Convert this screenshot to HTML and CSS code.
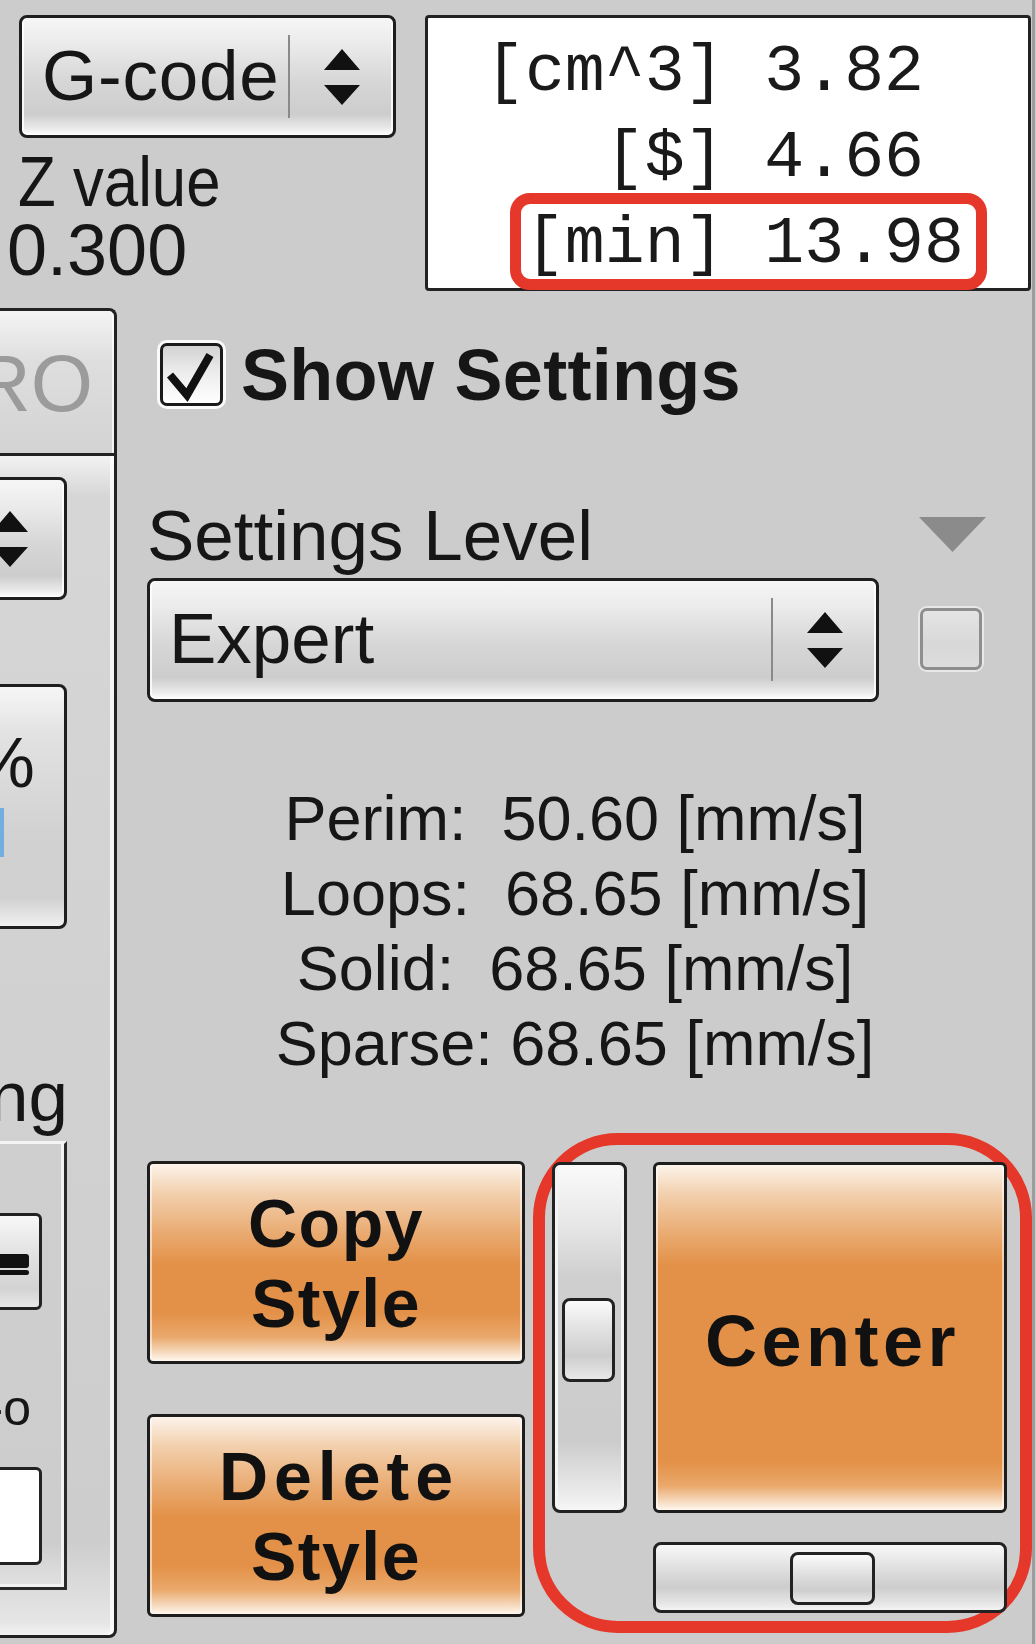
FILE: index.html
```html
<!DOCTYPE html>
<html lang="en">
<head>
<meta charset="utf-8">
<title>Settings panel</title>
<link rel="stylesheet" href="styles.css">
</head>
<body>
<div class="page">
  <div class="top">
    <div class="top-left">
      <div class="combo combo-gcode">
        <span class="combo-text">G-code</span>
        <span class="combo-sep"></span>
        <span class="combo-arrows"><svg class="spin" viewBox="0 0 36 56" width="36" height="56"><path d="M18 0 L36 21 L0 21 Z M0 36 L36 36 L18 56 Z"/></svg></span>
      </div>
      <div class="zlabel"><span class="zlabel-text">Z value</span></div>
      <div class="zval">0.300</div>
    </div>
    <div class="stats">
      <div class="stat-line">[cm^3] 3.82</div>
      <div class="stat-line">   [$] 4.66</div>
      <div class="stat-line"> <span class="hl">[min] 13.98</span></div>
    </div>
  </div>
  <div class="bottom">
    <div class="side">
      <div class="tab">RO</div>
      <div class="panel">
        <div class="combo combo-side">
          <span class="combo-text"></span>
          <span class="combo-arrows side-arrows"><svg class="spin" viewBox="0 0 36 56" width="36" height="56"><path d="M18 0 L36 21 L0 21 Z M0 36 L36 36 L18 56 Z"/></svg></span>
        </div>
        <div class="pct-box">
          <span class="pct">%</span>
          <span class="blue-mark"></span>
        </div>
        <div class="side-label">ng</div>
        <div class="group">
          <div class="bar-btn"><span class="bar bar-thick"></span><span class="bar bar-thin"></span></div>
          <div class="small-label">-o</div>
          <div class="entry"></div>
        </div>
      </div>
    </div>
    <div class="main">
      <div class="check-row">
        <span class="checkbox checked"><svg class="tick" viewBox="0 0 57 57" width="57" height="57"><path d="M7 29 L24 49 L47 9"/></svg></span>
        <span class="check-label">Show Settings</span>
      </div>
      <div class="level-row">
        <span class="level-label">Settings Level</span>
        <svg class="collapse" viewBox="0 0 67 35" width="67" height="35"><path d="M0 0 L67 0 L33.5 35 Z"/></svg>
      </div>
      <div class="expert-row">
        <div class="combo combo-expert">
          <span class="combo-text">Expert</span>
          <span class="combo-sep"></span>
          <span class="combo-arrows"><svg class="spin" viewBox="0 0 36 56" width="36" height="56"><path d="M18 0 L36 21 L0 21 Z M0 36 L36 36 L18 56 Z"/></svg></span>
        </div>
        <span class="checkbox disabled"></span>
      </div>
      <div class="speeds">
        <div class="speed-line">Perim:  50.60 [mm/s]</div>
        <div class="speed-line">Loops:  68.65 [mm/s]</div>
        <div class="speed-line">Solid:  68.65 [mm/s]</div>
        <div class="speed-line">Sparse: 68.65 [mm/s]</div>
      </div>
      <div class="actions">
        <div class="style-btns">
          <div class="obtn style-btn"><span class="obtn-label">Copy<br>Style</span></div>
          <div class="obtn style-btn"><span class="obtn-label"><span class="wide">Delete</span><br>Style</span></div>
        </div>
        <div class="view-group">
          <div class="vscroll"><span class="vthumb"></span></div>
          <div class="obtn center-btn"><span class="obtn-label">Center</span></div>
          <div class="hscroll"><span class="hthumb"></span></div>
        </div>
      </div>
    </div>
  </div>
</div>
</body>
</html>
```

FILE: styles.css
```css
* { box-sizing: border-box; }

html, body {
  margin: 0;
  padding: 0;
}

body {
  width: 1036px;
  height: 1644px;
  overflow: hidden;
  background: #cccccc;
  font-family: "Liberation Sans", Arial, sans-serif;
  color: #161616;
}

.page {
  width: 1035px;
  height: 1644px;
  border-right: 3px solid #9d9d9d;
}

/* ---------- top row ---------- */
.top {
  display: flex;
  align-items: flex-start;
  height: 291px;
}

.top-left {
  width: 425px;
  flex: none;
  padding-left: 19px;
  padding-top: 15px;
}

.combo {
  display: flex;
  align-items: flex-start;
  border: 3px solid #1e1e1e;
  border-radius: 8px;
  background: linear-gradient(to bottom, #f6f6f6 0%, #ebebeb 22%, #d6d6d6 55%, #cdcdcd 82%, #e9e9e9 94%, #ffffff 100%);
  box-shadow: inset 2px 0 0 rgba(255,255,255,0.8), inset -2px 0 0 rgba(255,255,255,0.8);
}

.combo-gcode {
  width: 377px;
  height: 123px;
}

.combo-gcode .combo-text {
  padding-left: 20px;
  letter-spacing: 0.8px;
}

.combo-text {
  flex: 1;
  padding-left: 19px;
  padding-top: 22px;
  font-size: 71px;
  line-height: 71px;
  white-space: nowrap;
}

.combo-sep {
  width: 2px;
  height: 83px;
  margin-top: 17px;
  background: #8a8a8a;
}

.combo-arrows {
  width: 103px;
  flex: none;
  display: flex;
  justify-content: center;
  padding-top: 31px;
}

.spin { display: block; fill: #111; }

.zlabel {
  margin-top: 10px;
  margin-left: -1px;
  font-size: 71px;
  line-height: 68px;
  white-space: nowrap;
}

.zlabel-text {
  display: inline-block;
  transform: scaleX(0.87);
  transform-origin: 0 0;
}

.zval {
  margin-left: -12px;
  font-size: 72px;
  line-height: 68px;
}

.stats {
  width: 606px;
  height: 276px;
  margin-top: 15px;
  flex: none;
  border: 3px solid #222;
  border-radius: 4px;
  background: #ffffff;
  padding-top: 12px;
  padding-left: 57px;
  font-family: "Courier New", "Liberation Mono", monospace;
  font-size: 66.5px;
  line-height: 86px;
  color: #1a1a1a;
}

.stat-line { white-space: pre; }

.hl {
  display: inline-block;
  border: 11px solid #e5382a;
  border-radius: 20px;
  margin: -20px 0 -20px -15px;
  padding: 7px 12px 0 4px;
  line-height: 68px;
}

/* ---------- bottom ---------- */
.bottom {
  display: flex;
  height: 1353px;
}

.side {
  width: 118px;
  flex: none;
  overflow: hidden;
}

.tab {
  margin-top: 17px;
  margin-left: -40px;
  width: 157px;
  height: 145px;
  border: 3px solid #222;
  border-bottom: none;
  border-radius: 0 8px 0 0;
  background: linear-gradient(to bottom, #f4f4f4 0%, #dedede 35%, #d3d3d3 100%);
  box-shadow: inset -2px 0 0 rgba(255,255,255,0.7);
  text-align: right;
  padding-right: 21px;
  padding-top: 33px;
  font-size: 80px;
  line-height: 80px;
  color: #9b9b9b;
}

.panel {
  margin-left: -40px;
  width: 157px;
  height: 1185px;
  border: 3px solid #222;
  border-left: none;
  border-radius: 0 0 8px 0;
  background: linear-gradient(to bottom, #f2f2f2 0px, #d6d6d6 40px, #cdcdcd 92%, #e6e6e6 99%, #f4f4f4 100%);
  box-shadow: inset -4px 0 0 rgba(255,255,255,0.75);
  display: flex;
  flex-direction: column;
  align-items: flex-end;
  padding-right: 47px;
}

.combo-side {
  margin-top: 21px;
  width: 160px;
  height: 123px;
  flex: none;
}

.side-arrows { width: 108px; }

.pct-box {
  margin-top: 84px;
  width: 160px;
  height: 245px;
  flex: none;
  border: 3px solid #1e1e1e;
  border-radius: 8px;
  background: linear-gradient(to bottom, #f6f6f6 0%, #e2e2e2 20%, #d2d2d2 60%, #d0d0d0 88%, #f0f0f0 100%);
  display: flex;
  flex-direction: column;
  align-items: flex-end;
  padding-right: 29px;
  padding-top: 40px;
}

.pct {
  font-size: 71px;
  line-height: 71px;
}

.blue-mark {
  display: block;
  width: 4px;
  height: 49px;
  margin-top: 10px;
  margin-right: 31px;
  background: #72aee0;
}

.side-label {
  margin-top: 132px;
  margin-right: -1px;
  font-size: 71px;
  line-height: 71px;
}

.group {
  margin-top: 9px;
  width: 160px;
  height: 449px;
  flex: none;
  border-top: 3px solid #f4f4f4;
  border-right: 3px solid #2a2a2a;
  border-bottom: 3px solid #2a2a2a;
  box-shadow: inset -3px -3px 0 #f2f2f2;
  background: linear-gradient(to bottom, #cfcfcf 0%, #cdcdcd 90%, #e2e2e2 100%);
  display: flex;
  flex-direction: column;
  align-items: flex-end;
  padding-right: 22px;
}

.bar-btn {
  margin-top: 69px;
  width: 120px;
  height: 97px;
  flex: none;
  border: 3px solid #222;
  border-radius: 6px;
  background: linear-gradient(to bottom, #f8f8f8 0%, #e2e2e2 40%, #d3d3d3 80%, #e8e8e8 100%);
  display: flex;
  flex-direction: column;
  align-items: flex-end;
  padding-right: 10px;
}

.bar {
  display: block;
  width: 60px;
  background: #111;
  border-radius: 0 3px 3px 0;
}

.bar-thick { height: 14px; margin-top: 38px; }
.bar-thin { height: 5px; margin-top: 2px; }

.small-label {
  margin-top: 73px;
  margin-right: 11px;
  font-size: 50px;
  line-height: 50px;
}

.entry {
  margin-top: 34px;
  width: 120px;
  height: 98px;
  flex: none;
  border: 3px solid #222;
  border-radius: 6px;
  background: #ffffff;
}

/* ---------- main column ---------- */
.main {
  flex: none;
  width: 914px;
  min-width: 0;
  padding-left: 29px;
  padding-right: 45px;
}

.check-row {
  display: flex;
  align-items: flex-start;
  margin-top: 52px;
}

.checkbox {
  display: block;
  flex: none;
  width: 63px;
  height: 63px;
  border-radius: 7px;
}

.checkbox.checked {
  margin-left: 13px;
  border: 3px solid #1a1a1a;
  background: linear-gradient(to bottom, #d2d2d2 0%, #ececec 45%, #ffffff 100%);
  box-shadow: 0 0 0 3px rgba(255,255,255,0.9);
}

.tick {
  display: block;
  fill: none;
  stroke: #111;
  stroke-width: 8;
  stroke-linejoin: miter;
}

.check-label {
  margin-left: 18px;
  margin-top: -3px;
  font-weight: bold;
  font-size: 72px;
  line-height: 71px;
  letter-spacing: 0.3px;
  white-space: nowrap;
}

.level-row {
  display: flex;
  justify-content: space-between;
  align-items: flex-start;
  margin-top: 89px;
}

.level-label {
  font-size: 71px;
  line-height: 71px;
  white-space: nowrap;
}

.collapse {
  display: block;
  flex: none;
  margin-top: 17px;
  margin-right: 1px;
  fill: #8b8b8b;
}

.expert-row {
  display: flex;
  align-items: flex-start;
  margin-top: 7px;
}

.combo-expert {
  width: 732px;
  height: 124px;
  flex: none;
}

.checkbox.disabled {
  margin-left: 41px;
  margin-top: 30px;
  width: 62px;
  height: 62px;
  border: 3px solid #8e8e8e;
  background: linear-gradient(to bottom, #e4e4e4 0%, #d8d8d8 60%, #dcdcdc 100%);
  box-shadow: 0 0 0 2px rgba(235,235,235,0.9);
}

.speeds {
  margin: 79px -45px 0 -29px;
  text-align: center;
  font-size: 63px;
  line-height: 75px;
}

.speed-line { white-space: pre; }

.actions {
  display: flex;
  align-items: flex-start;
  margin-top: 52px;
}

.style-btns {
  width: 378px;
  flex: none;
  margin-top: 28px;
  display: flex;
  flex-direction: column;
  gap: 50px;
}

.obtn {
  border: 3px solid #1d1d1d;
  border-radius: 6px;
  background: linear-gradient(to bottom, #fcf3ea 0px, #f2cfac 30px, #e9aa70 70px, #e39148 100px, #e39148 calc(100% - 48px), #eaa96c calc(100% - 24px), #f6dcc2 calc(100% - 8px), #fff7ef 100%);
  box-shadow: inset 2px 0 0 rgba(255,255,255,0.55), inset -2px 0 0 rgba(255,255,255,0.55);
  display: flex;
  align-items: center;
  justify-content: center;
  font-weight: bold;
  color: #111;
}

.obtn-label {
  display: block;
  text-align: center;
  white-space: nowrap;
}

.style-btn {
  height: 203px;
  font-size: 68px;
  line-height: 80px;
  letter-spacing: 1.5px;
}

.wide { letter-spacing: 6px; margin-right: -6px; }

.view-group {
  margin-left: 8px;
  width: 499px;
  height: 500px;
  flex: none;
  border: 12px solid #e5382a;
  border-radius: 85px;
  padding: 17px 13px 8px 7px;
  display: grid;
  grid-template-columns: 75px 354px;
  grid-template-rows: 351px 71px;
  column-gap: 26px;
  row-gap: 29px;
}

.vscroll {
  border: 3px solid #222;
  border-radius: 8px;
  background: linear-gradient(to bottom, #fafafa 0%, #e6e6e6 18%, #cfcfcf 32%, #cccccc 80%, #e4e4e4 92%, #f6f6f6 100%);
  box-shadow: inset 3px 0 0 #f4f4f4, inset -3px 0 0 #f4f4f4;
  padding-left: 7px;
  padding-top: 133px;
}

.vthumb {
  display: block;
  width: 53px;
  height: 84px;
  border: 3px solid #222;
  border-radius: 8px;
  background: linear-gradient(to bottom, #fbfbfb 0%, #e2e2e2 35%, #cdcdcd 70%, #e8e8e8 100%);
}

.center-btn {
  font-size: 72px;
  line-height: 72px;
  letter-spacing: 4.5px;
  padding-top: 6px;
  padding-left: 5px;
}

.hscroll {
  grid-column: 2;
  border: 3px solid #222;
  border-radius: 8px;
  background: linear-gradient(to bottom, #f8f8f8 0%, #e0e0e0 35%, #cdcdcd 65%, #e6e6e6 90%, #f4f4f4 100%);
  padding-left: 134px;
  padding-top: 7px;
}

.hthumb {
  display: block;
  width: 85px;
  height: 53px;
  border: 3px solid #222;
  border-radius: 8px;
  background: linear-gradient(to bottom, #fafafa 0%, #dddddd 45%, #cdcdcd 75%, #ececec 100%);
}
```
